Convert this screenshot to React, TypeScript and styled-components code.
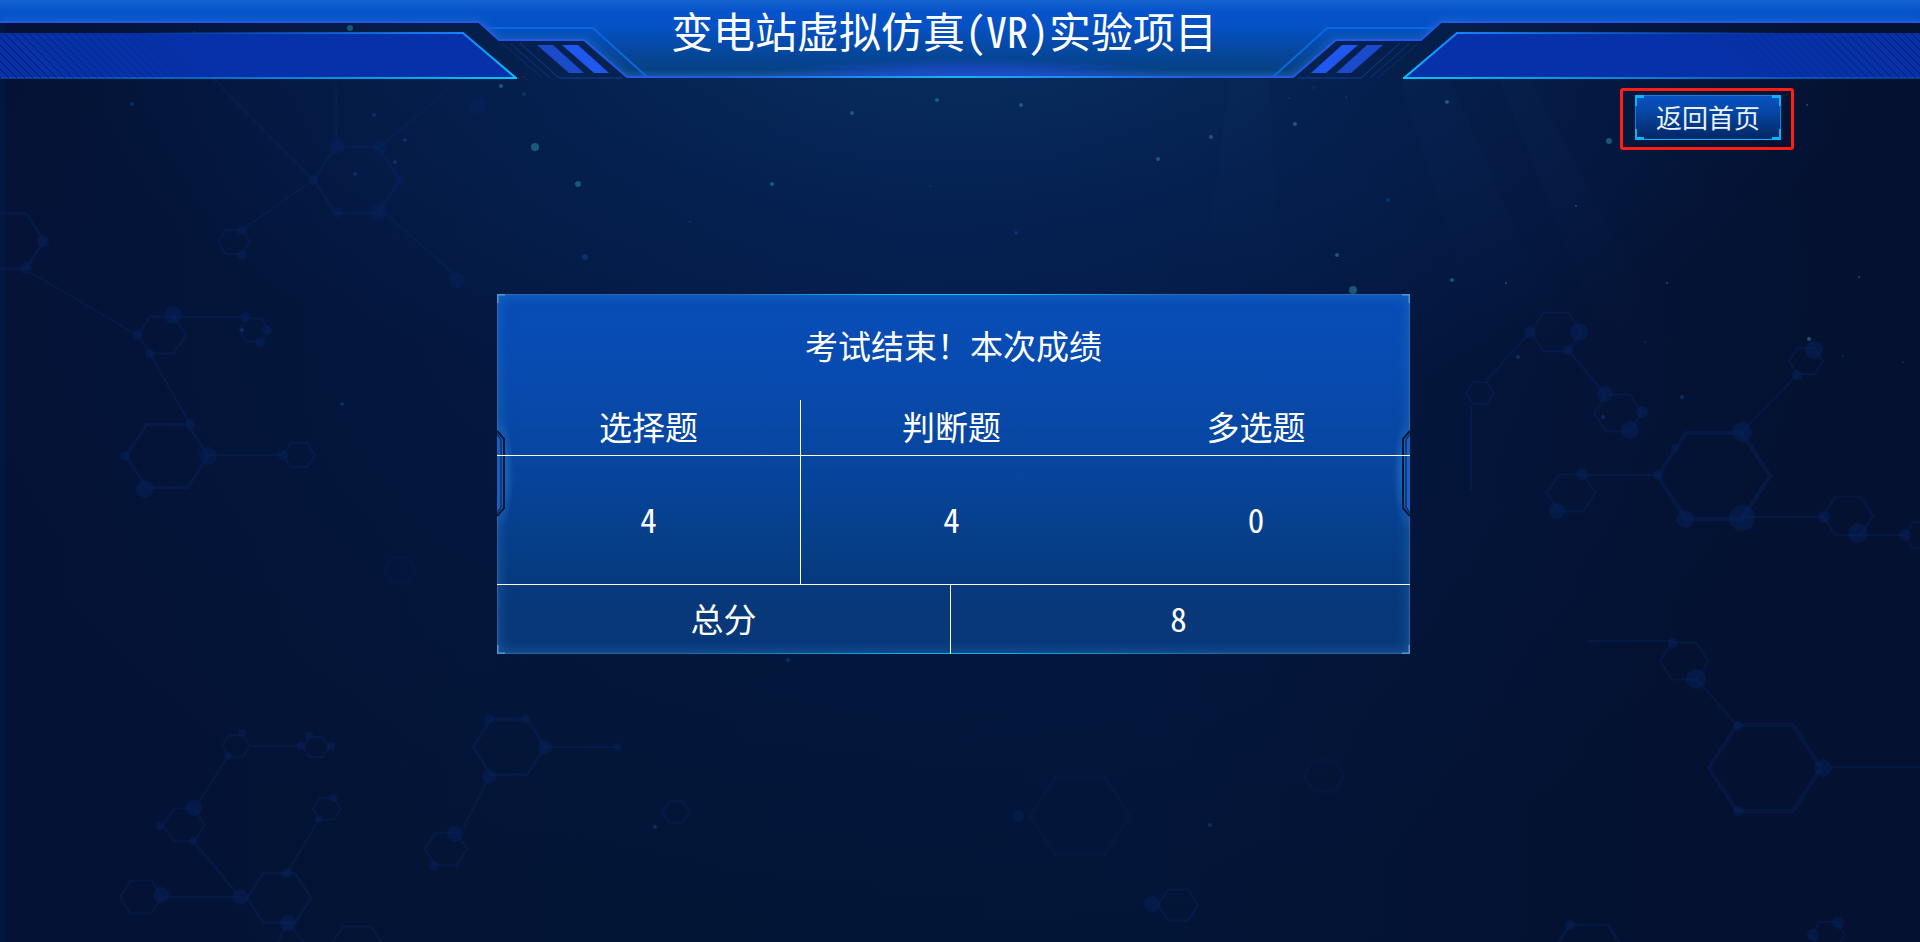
import React from "react";
import styled, { createGlobalStyle } from "styled-components";

const GlobalStyle = createGlobalStyle`
  * { box-sizing: border-box; }
  body {
    margin: 0;
    background: #031130;
    color: #fff;
    font-family: "Noto Sans CJK SC", "Liberation Sans", sans-serif;
    font-feature-settings: "hwid";
  }
`;

const Page = styled.div`
  position: relative;
  min-height: 100vh;
  overflow: hidden;
  background:
    linear-gradient(90deg, rgba(8, 40, 110, 0.2) 0 5px, transparent 5px),
    radial-gradient(ellipse 48% 46% at 50% 0%, rgba(9, 54, 108, 0.8) 0%, rgba(6, 40, 94, 0.5) 50%, transparent 100%),
    radial-gradient(ellipse 52% 70% at 48% 30%, rgba(6, 30, 86, 0.5) 0%, transparent 100%),
    linear-gradient(90deg, #041235 0%, #031535 30%, #031537 60%, #041130 88%, #041130 100%);
`;

const Backdrop = styled.svg`
  position: absolute;
  inset: 0;
  width: 100%;
  height: 100%;
`;

const Header = styled.header`
  position: relative;
  height: 80px;
  display: flex;
  justify-content: center;
  padding-right: 32px;
`;

const HeaderArt = styled.svg`
  position: absolute;
  inset: 0;
  width: 100%;
  height: 100%;
`;

const Title = styled.h1`
  position: relative;
  margin: 0;
  font-size: 42px;
  line-height: 60px;
  font-weight: 400;
  white-space: nowrap;
`;

const Nav = styled.nav`
  position: relative;
  display: flex;
  justify-content: flex-end;
  padding: 8px 126px 0 0;
`;

const Highlight = styled.div`
  border: 3px solid #ff1e12;
  border-radius: 3px;
  padding: 4px 10px 7px 12px;
`;

const HomeButton = styled.button`
  position: relative;
  display: block;
  width: 146px;
  height: 45px;
  padding: 0 0 2px;
  border: 0;
  background: linear-gradient(#0752c4 0%, #0648a8 35%, #042a6b 90%);
  color: #eaf4ff;
  font: inherit;
  font-size: 26px;
  line-height: 43px;
  cursor: pointer;
`;

const ButtonFrame = styled.svg`
  position: absolute;
  inset: 0;
  width: 100%;
  height: 100%;
`;

const Main = styled.main`
  position: relative;
  display: grid;
  grid-template-columns: 497fr 913fr 510fr;
  margin-top: 144px;
`;

const Panel = styled.section`
  position: relative;
  grid-column: 2;
  height: 360px;
  background: linear-gradient(#084db8 0%, #084bb0 20%, #07459e 48%, #063c82 75%, #083878 88%, #08397a 100%);
  box-shadow:
    inset 0 0 1px 1px rgba(60, 120, 175, 0.6),
    inset 0 0 14px 1px rgba(48, 125, 205, 0.5);

  &::before {
    content: "";
    position: absolute;
    inset: 0;
    background:
      linear-gradient(90deg, transparent 25%, #00c8ee 44%, #00c8ee 56%, transparent 75%) top / 100% 1px no-repeat,
      linear-gradient(90deg, transparent 20%, #00b4e6 44%, #00b4e6 56%, transparent 80%) bottom / 100% 1px no-repeat;
  }
`;

const PanelFrame = styled.svg<{ $right?: boolean }>`
  position: absolute;
  top: 0;
  ${(p) => (p.$right ? "right: 0; transform: scaleX(-1);" : "left: 0;")}
  width: 24px;
  height: 100%;
`;

const PanelTitle = styled.h2`
  margin: 0;
  padding-bottom: 4px;
  font-size: 33px;
  line-height: 102px;
  font-weight: 400;
  text-align: center;
`;

const ScoreTable = styled.table`
  position: relative;
  width: 100%;
  table-layout: fixed;
  border-collapse: separate;
  border-spacing: 0;
  font-size: 33px;
  text-align: center;
`;

const Row = styled.tr<{ $height: number }>`
  height: ${(p) => p.$height}px;
`;

const cell = (divider?: boolean, underline?: boolean) => `
  padding: 0 ${divider ? "0" : "4px"} 3px 0;
  font-weight: 400;
  line-height: 48px;
  border-right: ${divider ? "1px solid #fff" : "0"};
  border-bottom: ${underline ? "1px solid #fff" : "0"};
`;

const HeadCell = styled.th<{ $divider?: boolean; $underline?: boolean }>`
  ${(p) => cell(p.$divider, p.$underline)}
`;

const Cell = styled.td<{ $divider?: boolean; $underline?: boolean }>`
  ${(p) => cell(p.$divider, p.$underline)}
`;

const Col = styled.col<{ $width: number }>`
  width: ${(p) => p.$width}%;
`;

type Triple = [number, number, number];
type Segment = [number, number, number, number];

/* Molecule rings: centre x, centre y, radius */
const rings: Triple[] = [
  [357, 180, 43], [8, 241, 36], [162, 335, 24], [254, 330, 15], [167, 456, 41],
  [299, 455, 16], [234, 242, 16], [236, 746, 14], [316, 747, 13], [184, 825, 21],
  [327, 809, 14], [141, 897, 21], [279, 898, 32], [509, 747, 36], [446, 849, 21],
  [676, 812, 14], [1684, 661, 24], [1765, 768, 56], [1589, 954, 38], [1828, 935, 17],
  [1714, 476, 56], [1806, 361, 17], [1848, 516, 25], [1922, 535, 17], [1571, 493, 24],
  [1556, 332, 25], [1618, 413, 24], [1480, 393, 14], [357, 948, 28], [1178, 905, 20],
];

/* Rings that almost sink into the background */
const faintRings: Triple[] = [[1080, 816, 50], [400, 570, 16], [1324, 776, 20]];

/* Atoms: x, y, radius */
const atoms: Triple[] = [
  [337, 146, 8], [380, 147, 7], [379, 212, 8], [400, 180, 5], [313, 180, 5], [337, 213, 5],
  [43, 241, 6], [26, 268, 6], [173, 315, 9], [137, 335, 5], [150, 354, 5], [245, 317, 5],
  [267, 330, 5], [260, 343, 5], [190, 424, 5], [208, 456, 9], [145, 489, 9], [125, 456, 5],
  [283, 455, 5], [242, 230, 5], [242, 255, 5], [478, 106, 9], [457, 280, 8],
  [194, 808, 8], [161, 895, 8], [240, 897, 8], [288, 923, 8], [287, 873, 5], [242, 733, 4],
  [228, 756, 4], [309, 735, 4], [301, 746, 4], [331, 746, 4], [333, 798, 4], [319, 819, 4],
  [160, 826, 4], [193, 841, 4], [489, 777, 7], [545, 747, 7], [489, 719, 5], [525, 719, 5],
  [455, 834, 8], [434, 866, 5], [618, 747, 4], [1673, 643, 5], [1696, 679, 10], [1738, 726, 5],
  [1738, 811, 5], [1823, 768, 9], [1570, 925, 5], [1838, 923, 6], [1813, 935, 6],
  [1742, 432, 10], [1742, 518, 13], [1685, 519, 9], [1658, 475, 5], [1675, 448, 4],
  [1814, 350, 9], [1797, 375, 5], [1824, 517, 6], [1858, 533, 10], [1905, 535, 6],
  [1582, 474, 6], [1557, 511, 8], [1530, 332, 6], [1579, 332, 9], [1568, 350, 5],
  [1605, 394, 8], [1642, 412, 6], [1630, 430, 9], [1152, 904, 8], [1018, 816, 6],
];

const bonds: Segment[] = [
  [210, 75, 313, 180], [336, 83, 336, 146], [380, 147, 455, 84], [385, 213, 455, 275],
  [313, 180, 242, 230], [30, 272, 137, 335], [173, 317, 245, 317], [150, 354, 190, 424],
  [208, 455, 283, 455], [251, 746, 301, 746], [228, 756, 199, 802], [193, 841, 236, 892],
  [166, 897, 240, 897], [287, 873, 319, 819], [489, 777, 463, 828], [545, 747, 618, 747],
  [288, 923, 278, 942], [288, 923, 304, 942], [1696, 679, 1738, 726], [1832, 767, 1920, 767],
  [1587, 641, 1673, 641], [1742, 432, 1797, 375], [1742, 517, 1824, 517],
  [1858, 535, 1905, 535], [1582, 475, 1658, 475], [1568, 350, 1605, 394],
  [1530, 332, 1487, 380], [1471, 405, 1471, 490],
];

/* Bright specks: x, y, radius */
const specks: Triple[] = [
  [535, 147, 4], [578, 184, 3], [852, 113, 2], [772, 184, 2], [937, 100, 2], [1353, 290, 4],
  [1609, 141, 3], [1447, 102, 2], [1337, 255, 2], [1452, 280, 2], [1506, 283, 1],
  [1667, 283, 1], [1859, 277, 1], [1576, 206, 1], [1158, 159, 2], [1295, 124, 2],
  [1211, 137, 2], [350, 28, 3], [501, 86, 2], [1809, 339, 2], [1807, 105, 1], [1021, 105, 2],
];

const dimSpecks: Triple[] = [
  [132, 104, 2], [374, 115, 2], [405, 140, 2], [395, 162, 2], [355, 174, 2], [585, 257, 3],
  [788, 660, 2], [655, 827, 2], [1210, 825, 2], [1016, 233, 2], [342, 404, 2], [242, 330, 2],
  [1603, 417, 2], [1518, 357, 2], [1645, 342, 1], [1682, 397, 2], [1843, 356, 1],
  [1903, 362, 1], [524, 94, 2], [122, 38, 2], [194, 32, 1], [1314, 88, 1], [1289, 98, 1],
  [1346, 97, 1], [1388, 200, 2], [1700, 135, 1], [930, 186, 1], [690, 222, 1],
];

const ringPoints = ([x, y, r]: Triple) => {
  const h = r * 0.77;
  return [
    [x - r, y], [x - r / 2, y - h], [x + r / 2, y - h],
    [x + r, y], [x + r / 2, y + h], [x - r / 2, y + h],
  ].map((p) => p.join(",")).join(" ");
};

const Molecules = () => (
  <Backdrop viewBox="0 0 1920 942" preserveAspectRatio="xMidYMin slice" aria-hidden="true">
    <defs>
      <linearGradient id="ray" x1="0" y1="0" x2="0" y2="1">
        <stop offset="0" stopColor="#2b5a96" stopOpacity="0.04" />
        <stop offset="1" stopColor="#2b5a96" stopOpacity="0" />
      </linearGradient>
    </defs>
    <g fill="url(#ray)">
      <polygon points="1230,80 1270,80 1280,300 1200,300" />
      <polygon points="1400,80 1450,80 1560,330 1480,330" />
      <polygon points="1500,80 1530,80 1680,360 1610,360" />
    </g>
    <g stroke="#0a2462" strokeOpacity="0.38" strokeWidth="2" fill="none">
      {bonds.map(([x1, y1, x2, y2], i) => (
        <line key={i} x1={x1} y1={y1} x2={x2} y2={y2} />
      ))}
      {rings.map((ring, i) => (
        <polygon key={i} points={ringPoints(ring)} strokeWidth={ring[2] > 50 ? 4 : ring[2] > 30 ? 3 : 2} />
      ))}
    </g>
    <g stroke="#0a2462" strokeOpacity="0.18" strokeWidth="3" fill="none">
      {faintRings.map((ring, i) => <polygon key={i} points={ringPoints(ring)} />)}
    </g>
    <g fill="#05215c" fillOpacity="0.5">
      {atoms.map(([x, y, r], i) => <circle key={i} cx={x} cy={y} r={r} />)}
    </g>
    <g fill="#2f93a8" fillOpacity="0.5">
      {specks.map(([x, y, r], i) => <circle key={i} cx={x} cy={y} r={r} />)}
    </g>
    <g fill="#0b4f9c" fillOpacity="0.45">
      {dimSpecks.map(([x, y, r], i) => <circle key={i} cx={x} cy={y} r={r} />)}
    </g>
  </Backdrop>
);

const hatch = Array.from({ length: 30 }, (_, i) => i * 8 - 44);

const Hatching = ({ right }: { right?: boolean }) => (
  <g stroke="#04123f" strokeWidth="1">
    {hatch.map((offset) => {
      const x = right ? 1875 - offset : offset;
      return (
        <line key={offset} x1={x} y1={33} x2={x + 45} y2={78} strokeOpacity={Math.max(0, 0.8 - (offset + 44) / 270)} />
      );
    })}
  </g>
);

const HeaderWing = () => (
  <g>
    <polygon points="0,33 463,33 516,78 0,78" fill="#0731a8" />
    <rect x="0" y="32" width="464" height="2" fill="url(#wingTop)" />
    <rect x="0" y="77" width="517" height="2" fill="url(#wingBottom)" />
    <line x1="463" y1="33" x2="516" y2="78" stroke="url(#wingEdge)" strokeWidth="2" />
    <polyline points="486,28 593,28 647,77" fill="none" stroke="#0a68dc" strokeWidth="2" />
    <g fill="none" stroke="#123c92">
      <polyline points="520,43 559,78 622,78" />
      <line x1="511" y1="44" x2="550" y2="78" strokeOpacity="0.7" />
      <line x1="503" y1="44" x2="542" y2="78" strokeOpacity="0.5" />
    </g>
    <polygon points="537,45 553,45 584,73 569,73" fill="#1b4bcb" />
    <polygon points="562,45 578,45 609,73 594,73" fill="#2057ef" />
  </g>
);

const HeaderShape = () => (
  <HeaderArt viewBox="0 0 1920 80" preserveAspectRatio="none" aria-hidden="true">
    <defs>
      <linearGradient id="band" gradientUnits="userSpaceOnUse" x1="0" y1="0" x2="0" y2="78">
        <stop offset="0" stopColor="#1463cc" />
        <stop offset="0.15" stopColor="#0553cb" />
        <stop offset="0.35" stopColor="#0551c4" />
        <stop offset="0.65" stopColor="#06489f" />
        <stop offset="0.9" stopColor="#064183" />
        <stop offset="1" stopColor="#0f4b8c" />
      </linearGradient>
      <linearGradient id="baseLine" gradientUnits="userSpaceOnUse" x1="627" y1="0" x2="1293" y2="0">
        <stop offset="0.15" stopColor="#2158f0" />
        <stop offset="0.5" stopColor="#12b8f0" />
        <stop offset="0.85" stopColor="#2158f0" />
      </linearGradient>
      <linearGradient id="wingTop" gradientUnits="userSpaceOnUse" x1="0" y1="0" x2="464" y2="0">
        <stop offset="0.3" stopColor="#1583ff" stopOpacity="0" />
        <stop offset="1" stopColor="#1583ff" />
      </linearGradient>
      <linearGradient id="wingBottom" gradientUnits="userSpaceOnUse" x1="0" y1="0" x2="516" y2="0">
        <stop offset="0" stopColor="#0b58c8" stopOpacity="0.5" />
        <stop offset="0.5" stopColor="#0b78d8" />
        <stop offset="1" stopColor="#00c6ff" />
      </linearGradient>
      <linearGradient id="wingEdge" gradientUnits="userSpaceOnUse" x1="463" y1="33" x2="516" y2="78">
        <stop offset="0" stopColor="#1583ff" />
        <stop offset="1" stopColor="#00c6ff" />
      </linearGradient>
      <radialGradient id="glow" gradientUnits="userSpaceOnUse" cx="0" cy="0" r="1" gradientTransform="translate(970 78) scale(210 20)">
        <stop offset="0" stopColor="#204bd6" stopOpacity="0.9" />
        <stop offset="0.5" stopColor="#204bd6" stopOpacity="0.6" />
        <stop offset="1" stopColor="#204bd6" stopOpacity="0" />
      </radialGradient>
      <filter id="soft" x="-5%" y="-50%" width="110%" height="200%">
        <feGaussianBlur stdDeviation="4" />
      </filter>
      <clipPath id="bandClip">
        <polygon points="0,0 1920,0 1920,22 1441,22 1421,40 1336,40 1293,77 627,77 584,40 499,40 479,22 0,22" />
      </clipPath>
    </defs>
    <g clipPath="url(#bandClip)">
      <rect width="1920" height="80" fill="url(#band)" />
      <polyline
        points="0,24 479,24 499,42 584,42 627,79 1293,79 1336,42 1421,42 1441,24 1920,24"
        fill="none" stroke="#2f7bc6" strokeOpacity="0.6" strokeWidth="6" filter="url(#soft)"
      />
      <rect x="750" y="50" width="440" height="30" fill="url(#glow)" />
    </g>
    <HeaderWing />
    <g transform="translate(1920 0) scale(-1 1)"><HeaderWing /></g>
    <Hatching />
    <Hatching right />
    <polyline points="0,22 479,22 499,40 584,40 627,77" fill="none" stroke="#2457f0" strokeWidth="2" />
    <polyline points="1920,22 1441,22 1421,40 1336,40 1293,77" fill="none" stroke="#2457f0" strokeWidth="2" />
    <rect x="627" y="76" width="666" height="2" fill="url(#baseLine)" />
  </HeaderArt>
);

const SideOrnament = ({ right }: { right?: boolean }) => (
  <PanelFrame $right={right} viewBox="0 0 24 360" aria-hidden="true">
    <defs>
      <radialGradient id="notchGlow" gradientUnits="userSpaceOnUse" cx="0" cy="0" r="1" gradientTransform="translate(4 179) scale(13 56)">
        <stop offset="0.4" stopColor="#2f7fd0" stopOpacity="0.45" />
        <stop offset="1" stopColor="#2f7fd0" stopOpacity="0" />
      </radialGradient>
    </defs>
    <rect x="0" y="120" width="20" height="118" fill="url(#notchGlow)" />
    <path d="M0,9 V0 H8" fill="none" stroke="#4b9bd0" strokeWidth="3" />
    <path d="M0,351 V360 H8" fill="none" stroke="#4b9bd0" strokeWidth="3" />
    <polygon points="0,141 4,146 4,213 0,218" fill="#1a60c0" />
    <path d="M0,137 L7,145 V214 L0,222" fill="none" stroke="#04163c" strokeWidth="2" />
    <path d="M0,140 L4,146 V213 L0,219" fill="none" stroke="#04163c" strokeWidth="1" />
  </PanelFrame>
);

export default function App() {
  return (
    <Page>
      <GlobalStyle />
      <Molecules />
      <Header>
        <HeaderShape />
        <Title>变电站虚拟仿真(VR)实验项目</Title>
      </Header>
      <Nav>
        <Highlight>
          <HomeButton type="button">
            <ButtonFrame viewBox="0 0 146 45" aria-hidden="true">
              <rect x="0.5" y="0.5" width="145" height="44" fill="none" stroke="#0a86dc" />
              <path
                d="M0,0H9V3H2V11H0Z M146,0H137V3H144V11H146Z M0,45H9V42H2V34H0Z M146,45H137V42H144V34H146Z M9,44H137V45H9Z"
                fill="#06b6fa"
              />
            </ButtonFrame>
            返回首页
          </HomeButton>
        </Highlight>
      </Nav>
      <Main>
        <Panel>
          <SideOrnament />
          <SideOrnament right />
          <PanelTitle>考试结束！本次成绩</PanelTitle>
          <ScoreTable>
            <colgroup>
              <Col $width={33.3} />
              <Col $width={16.4} />
              <Col $width={17} />
              <Col $width={33.3} />
            </colgroup>
            <thead>
              <Row $height={56}>
                <HeadCell scope="col" $divider $underline>选择题</HeadCell>
                <HeadCell scope="col" colSpan={2} $underline>判断题</HeadCell>
                <HeadCell scope="col" $underline>多选题</HeadCell>
              </Row>
            </thead>
            <tbody>
              <Row $height={129}>
                <Cell $divider $underline>4</Cell>
                <Cell colSpan={2} $underline>4</Cell>
                <Cell $underline>0</Cell>
              </Row>
            </tbody>
            <tfoot>
              <Row $height={69}>
                <HeadCell scope="row" colSpan={2} $divider>总分</HeadCell>
                <Cell colSpan={2}>8</Cell>
              </Row>
            </tfoot>
          </ScoreTable>
        </Panel>
      </Main>
    </Page>
  );
}
